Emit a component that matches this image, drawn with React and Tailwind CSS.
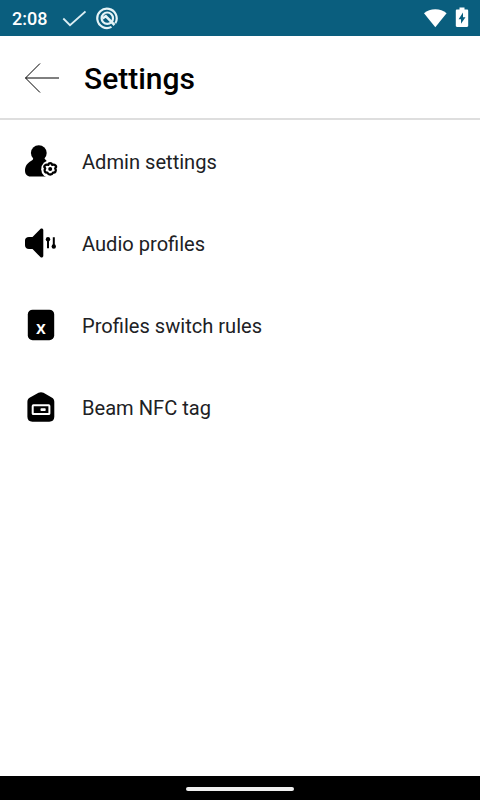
import React from "react";

const AdminIcon = () => (
  <svg className="w-10 h-10" viewBox="0 0 40 40">
    <ellipse cx="17.8" cy="11" rx="7.9" ry="7.7" />
    <path d="M12.5 15h10.5c0 3 5 4 5 9v10.500H9.5C6 34.500 4 32 4 28.500c0-4.500 2.500-7.500 6-9.500 1.800-1 2.500-2 2.500-4z" />
    <circle cx="29.2" cy="27.200" r="9" fill="white" />
    <path
      d="M27.300 22.800c.6-2.200 3.200-2.200 3.800 0 2.900-.9 5.200 1.500 3.100 3.600 1.600 2.600-.1 4.600-2.200 4.200-1.100 2.500-4.500 2.500-5.600 0-2.100.4-3.800-1.600-2.200-4.200-2.100-2.100.2-4.500 3.100-3.600z"
      fill="white"
      stroke="black"
      strokeWidth="2.300"
      strokeLinejoin="round"
    />
    <circle cx="29.200" cy="27" r="2" />
  </svg>
);

const AudioIcon = () => (
  <svg className="w-10 h-10" viewBox="0 0 40 40">
    <path d="M8 13h3.500L19.400 5c1-1 2.900-.4 2.900 1v26.100c0 1.400-1.900 2-2.900 1l-7.900-8.100H8C5.500 25 4 23.600 4 21.200v-4.700C4 14.200 5.500 13 8 13z" />
    <path d="M27 14v10.300M32.800 13.300v10.300" stroke="black" strokeWidth="2" />
    <circle cx="27" cy="15.300" r="2.200" />
    <circle cx="32.800" cy="22.500" r="2.200" />
  </svg>
);

const RulesIcon = () => (
  <svg className="w-10 h-10" viewBox="0 0 40 40">
    <rect x="6.800" y="3.700" width="26.400" height="30.500" rx="4.800" />
    <text
      x="20"
      y="28"
      textAnchor="middle"
      fill="white"
      className="font-['Noto_Sans',sans-serif] text-[17.5px] font-semibold"
    >
      x
    </text>
  </svg>
);

const NfcIcon = () => (
  <svg className="w-10 h-10" viewBox="0 0 40 40">
    <path d="M17.500 4.800c1.700-.9 3.300-.9 5 0l8.200 4.800c1.800 1 2.600 2.300 2.600 4.200v15c0 3.200-1.800 4.900-5 4.900H11.400c-3.200 0-5-1.700-5-4.900v-15c0-1.900.8-3.200 2.600-4.200z" />
    <rect x="11.700" y="17.200" width="16.700" height="8.900" rx=".7" fill="none" stroke="white" strokeWidth="2" />
    <rect x="19.500" y="20.300" width="5.200" height="2.800" rx=".8" fill="white" />
  </svg>
);

const items = [
  { label: "Admin settings", Icon: AdminIcon },
  { label: "Audio profiles", Icon: AudioIcon },
  { label: "Profiles switch rules", Icon: RulesIcon },
  { label: "Beam NFC tag", Icon: NfcIcon },
];

function StatusBar() {
  return (
    <div className="h-9 shrink-0 bg-[#0a5e7e] flex items-center pl-3 pr-[11px] text-white">
      <span className="w-[50px] text-[18px] leading-none font-medium pt-0.5">2:08</span>
      <svg className="w-6 h-6" viewBox="0 0 24 24" fill="none" stroke="#dceef3" strokeWidth="1.800">
        <path d="M1.300 12.500l6.700 6.700L23.500 5.500" />
      </svg>
      <svg className="ml-[9px] w-6 h-6" viewBox="0 0 24 24" fill="none" stroke="#e6f4f7">
        <path d="M16.500 20.900A9.700 9.700 0 1 1 20.300 17.300" strokeWidth="2.200" />
        <circle cx="12.300" cy="12.200" r="5.700" strokeWidth="2.200" />
        <path d="M7.500 12.500l3.300-2.300L19.500 19" strokeWidth="2.500" />
      </svg>
      <svg className="ml-auto w-6 h-6" viewBox="0 0 24 24" fill="white">
        <path d="M12.300 21.300L1 7.300C4 4.700 8 3.200 12.300 3.200s8.300 1.500 11.300 4.100z" />
      </svg>
      <svg className="ml-2 w-3.5 h-6" viewBox="0 0 14 24">
        <path d="M4.500 1.500h5v2H12c.7 0 1.200.5 1.200 1.200v15.100c0 .7-.5 1.200-1.200 1.200H2c-.7 0-1.200-.5-1.200-1.200V4.700C.8 4 1.300 3.500 2 3.500h2.500z" fill="white" />
        <path d="M8 6.500v4.700h2.500L6 17.700v-4.500H3.600z" fill="#0a5e7e" />
      </svg>
    </div>
  );
}

export default function App() {
  return (
    <div className="w-[480px] h-[800px] flex flex-col bg-white overflow-hidden font-[Roboto,sans-serif]">
      <StatusBar />

      <header className="h-[84px] shrink-0 flex items-center pl-6 pt-0.5 border-b-2 border-[#dedede]">
        <svg className="w-9 h-8" viewBox="0 0 36 32" fill="none" stroke="black" strokeWidth="1">
          <path d="M16 1.500L1.500 16 16 30.500M1.500 16H35" />
        </svg>
        <h1 className="ml-6 pt-0.5 text-[30px] leading-9 font-medium text-black">Settings</h1>
      </header>

      <main className="flex-1 pt-px">
        {items.map(({ label, Icon }) => (
          <div key={label} className="h-[82px] flex items-center pl-[21px]">
            <Icon />
            <span className="ml-[21px] text-[20.1px] leading-6 text-[#202124]">{label}</span>
          </div>
        ))}
      </main>

      <div className="h-6 shrink-0 bg-black flex items-center justify-center pt-0.5">
        <div className="w-[108px] h-1 rounded-full bg-[#f0f0f0]" />
      </div>
    </div>
  );
}
